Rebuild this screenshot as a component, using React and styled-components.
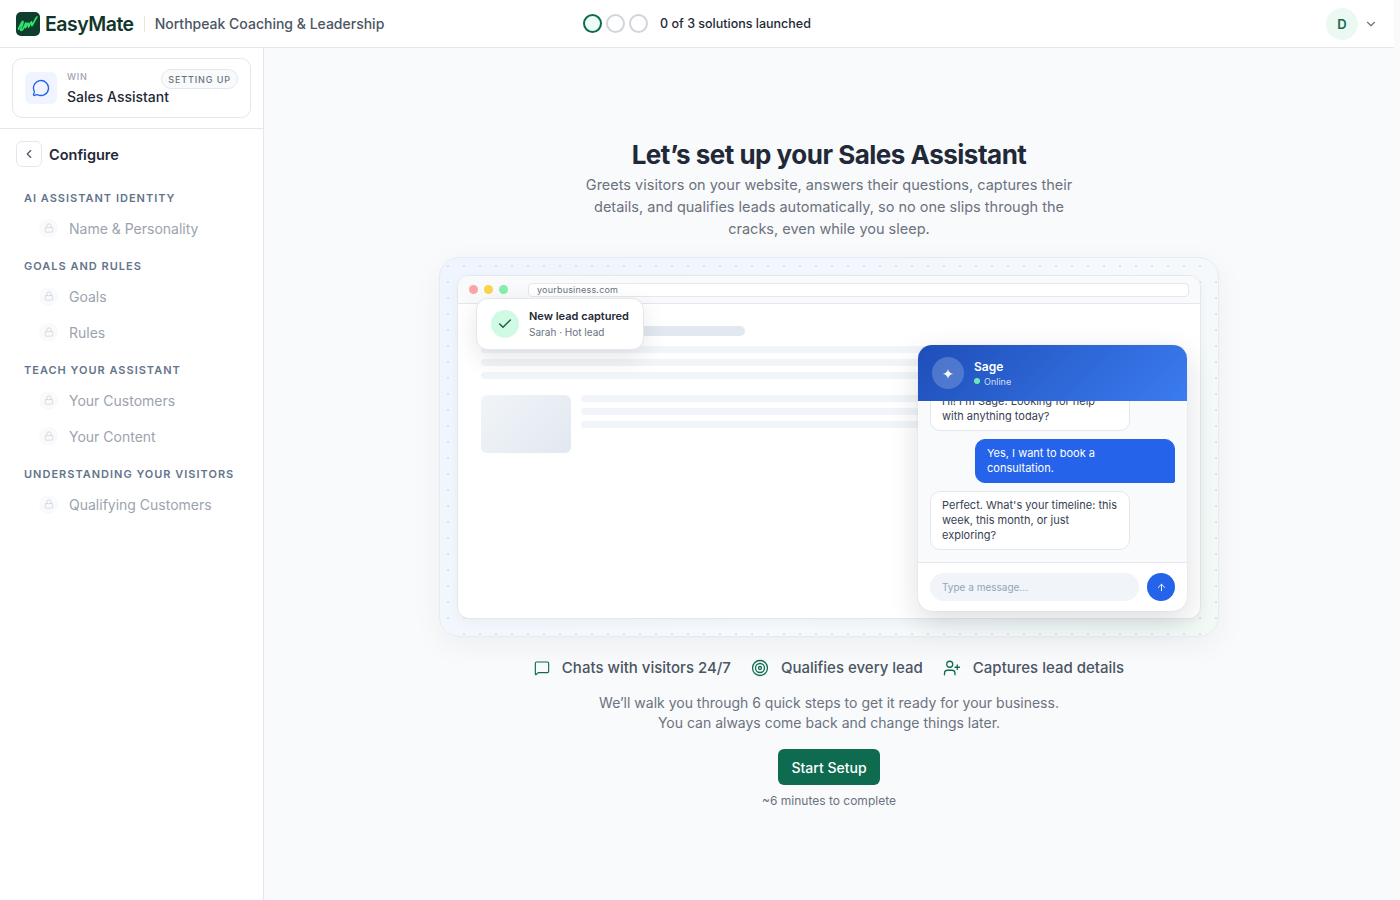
import styled, { createGlobalStyle } from "styled-components";
import {
  ArrowUp,
  Check,
  ChevronDown,
  ChevronLeft,
  Lock,
  MessageCircle,
  MessageSquare,
  Target,
  UserPlus,
} from "lucide-react";

const GlobalStyle = createGlobalStyle`
  * { box-sizing: border-box; }
  html, body { margin: 0; padding: 0; height: 100%; }
  body {
    background: #f9fafb;
    font-family: Inter, "Liberation Sans", sans-serif;
    color: #1f2937;
    overflow: hidden;
  }
`;

const NAV = [
  { title: "AI Assistant Identity", items: ["Name & Personality"] },
  { title: "Goals and Rules", items: ["Goals", "Rules"] },
  { title: "Teach Your Assistant", items: ["Your Customers", "Your Content"] },
  { title: "Understanding Your Visitors", items: ["Qualifying Customers"] },
];

function LogoMark() {
  return (
    <svg width="24" height="24" viewBox="0 0 24 24">
      <rect width="24" height="24" rx="5" fill="#0f3d2e" />
      <path
        d="M2.5 17c1.5-3 3-7 4.2-7.6 1-.4-.6 4.6-2 7.6-.6 1.6 1 1.8 2.2.2 1.2-1.6 2.4-5.2 3-6.2.4 1.2-.8 4.2-.4 4.6.8-1.4 2-4.8 2.8-4.6.6.2-.4 4 .2 4.2.8-1.4 2-5 3-5.4.4 1.2-.2 3.6.4 3.8 1-1 3-6 5-8.6"
        fill="none"
        stroke="#2ee66b"
        strokeWidth="1.7"
        strokeLinecap="round"
        strokeLinejoin="round"
      />
    </svg>
  );
}

export default function App() {
  return (
    <Shell>
      <GlobalStyle />
      <Frame>
        <TopBar>
          <Brand>
            <LogoMark />
            <BrandName>EasyMate</BrandName>
            <BrandDivider />
            <OrgName>Northpeak Coaching &amp; Leadership</OrgName>
          </Brand>
          <Progress>
            <ProgressRing $active />
            <ProgressRing />
            <ProgressRing />
            <ProgressText>0 of 3 solutions launched</ProgressText>
          </Progress>
          <UserArea>
            <Avatar>D</Avatar>
            <ChevronDown size={14} color="#6b7280" />
          </UserArea>
        </TopBar>
        <Body>
          <Sidebar>
            <SolutionWrap>
              <SolutionCard>
                <SolutionIcon>
                  <MessageCircle size={18} color="#2563eb" strokeWidth={1.8} />
                </SolutionIcon>
                <SolutionText>
                  <SolutionEyebrow>Win</SolutionEyebrow>
                  <SolutionName>Sales Assistant</SolutionName>
                </SolutionText>
                <StatusPill>Setting up</StatusPill>
              </SolutionCard>
            </SolutionWrap>
            <ConfigHead>
              <BackButton>
                <ChevronLeft size={14} color="#4b5563" />
              </BackButton>
              <ConfigTitle>Configure</ConfigTitle>
            </ConfigHead>
            <Nav>
              {NAV.map((section) => (
                <NavSection key={section.title}>
                  <NavLabel>{section.title}</NavLabel>
                  {section.items.map((item) => (
                    <NavItem key={item}>
                      <LockDot>
                        <Lock size={10} color="#d1d5db" />
                      </LockDot>
                      {item}
                    </NavItem>
                  ))}
                </NavSection>
              ))}
            </Nav>
          </Sidebar>
          <Main>
            <Title>Let’s set up your Sales Assistant</Title>
            <Lead>
              Greets visitors on your website, answers their questions, captures their
              details, and qualifies leads automatically, so no one slips through the cracks,
              even while you sleep.
            </Lead>
            <Stage>
              <Browser>
                <BrowserBar>
                  <WindowDots>
                    <WindowDot $color="#fca5a5" />
                    <WindowDot $color="#fcd34d" />
                    <WindowDot $color="#86efac" />
                  </WindowDots>
                  <UrlBar>yourbusiness.com</UrlBar>
                </BrowserBar>
                <BrowserBody>
                  <SkeletonHead />
                  <SkeletonLines>
                    <SkeletonLine />
                    <SkeletonLine />
                    <SkeletonLine />
                  </SkeletonLines>
                  <SkeletonRow>
                    <SkeletonImage />
                    <SkeletonLines>
                      <SkeletonLine />
                      <SkeletonLine />
                      <SkeletonLine />
                    </SkeletonLines>
                  </SkeletonRow>
                </BrowserBody>
              </Browser>
              <Toast>
                <ToastIcon>
                  <Check size={16} color="#166534" strokeWidth={2.2} />
                </ToastIcon>
                <div>
                  <ToastTitle>New lead captured</ToastTitle>
                  <ToastSub>Sarah · Hot lead</ToastSub>
                </div>
              </Toast>
              <ChatWidget>
                <ChatHeader>
                  <ChatAvatar>✦</ChatAvatar>
                  <div>
                    <ChatName>Sage</ChatName>
                    <ChatStatus>
                      <OnlineDot />
                      Online
                    </ChatStatus>
                  </div>
                </ChatHeader>
                <ChatMessages>
                  <Bubble>Hi! I'm Sage. Looking for help with anything today?</Bubble>
                  <Bubble $mine>Yes, I want to book a consultation.</Bubble>
                  <Bubble>Perfect. What's your timeline: this week, this month, or just exploring?</Bubble>
                </ChatMessages>
                <ChatInputRow>
                  <ChatInput>Type a message...</ChatInput>
                  <SendButton>
                    <ArrowUp size={11} color="#ffffff" />
                  </SendButton>
                </ChatInputRow>
              </ChatWidget>
            </Stage>
            <Features>
              <Feature>
                <MessageSquare size={16} color="#0f6b4f" strokeWidth={1.7} />
                Chats with visitors 24/7
              </Feature>
              <Feature>
                <Target size={18} color="#0f6b4f" strokeWidth={1.7} />
                Qualifies every lead
              </Feature>
              <Feature>
                <UserPlus size={18} color="#0f6b4f" strokeWidth={1.7} />
                Captures lead details
              </Feature>
            </Features>
            <WalkText>
              We’ll walk you through 6 quick steps to get it ready for your business. You
              can always come back and change things later.
            </WalkText>
            <StartButton>Start Setup</StartButton>
            <Estimate>~6 minutes to complete</Estimate>
          </Main>
        </Body>
      </Frame>
      <ScrollTrack />
    </Shell>
  );
}

const Shell = styled.div`
  display: flex;
  height: 900px;
  overflow: hidden;
`;

const Frame = styled.div`
  flex: 1;
  min-width: 0;
  display: flex;
  flex-direction: column;
`;

const ScrollTrack = styled.div`
  width: 6px;
  background: #fafafa;
`;

const TopBar = styled.header`
  height: 48px;
  flex: none;
  display: grid;
  grid-template-columns: 1fr auto 1fr;
  align-items: center;
  padding: 0 16px;
  background: #ffffff;
  border-bottom: 1px solid #e5e7eb;
  box-shadow: 0 1px 2px rgba(15, 23, 42, 0.03);
`;

const Brand = styled.div`
  display: flex;
  align-items: center;
`;

const BrandName = styled.span`
  margin-left: 5px;
  font-size: 19.5px;
  font-weight: 600;
  letter-spacing: -0.5px;
  color: #12372a;
`;

const BrandDivider = styled.span`
  width: 1px;
  height: 16px;
  margin: 0 10px;
  background: #e5e7eb;
`;

const OrgName = styled.span`
  font-size: 14px;
  font-weight: 500;
  color: #4b5563;
`;

const Progress = styled.div`
  display: flex;
  align-items: center;
  gap: 4px;
`;

const ProgressRing = styled.span`
  width: 19px;
  height: 19px;
  border-radius: 50%;
  border: 2px solid ${(p) => (p.$active ? "#0f6b4f" : "#d1d5db")};
  background: ${(p) => (p.$active ? "#ecfdf5" : "#ffffff")};
`;

const ProgressText = styled.span`
  margin-left: 8px;
  font-size: 12.5px;
  font-weight: 500;
  color: #1f2937;
`;

const UserArea = styled.div`
  display: flex;
  justify-content: flex-end;
  align-items: center;
  gap: 6px;
`;

const Avatar = styled.div`
  width: 32px;
  height: 32px;
  border-radius: 50%;
  display: flex;
  align-items: center;
  justify-content: center;
  background: #ecf8f2;
  color: #0f6b4f;
  font-size: 13px;
  font-weight: 600;
`;

const Body = styled.div`
  flex: 1;
  min-height: 0;
  display: flex;
`;

const Sidebar = styled.aside`
  width: 264px;
  flex: none;
  background: #ffffff;
  border-right: 1px solid #e5e7eb;
`;

const SolutionWrap = styled.div`
  padding: 10px 12px;
  border-bottom: 1px solid #e5e7eb;
`;

const SolutionCard = styled.div`
  position: relative;
  height: 60px;
  display: flex;
  align-items: center;
  gap: 10px;
  padding: 0 12px;
  border: 1px solid #e5e7eb;
  border-radius: 10px;
  background: #ffffff;
`;

const SolutionIcon = styled.div`
  width: 32px;
  height: 32px;
  flex: none;
  display: flex;
  align-items: center;
  justify-content: center;
  border-radius: 6px;
  background: #eff4fe;
`;

const SolutionText = styled.div`
  display: flex;
  flex-direction: column;
  gap: 5px;
`;

const SolutionEyebrow = styled.span`
  font-size: 9px;
  font-weight: 500;
  line-height: 12px;
  letter-spacing: 0.7px;
  text-transform: uppercase;
  color: #9ca3af;
`;

const SolutionName = styled.span`
  font-size: 14px;
  font-weight: 500;
  line-height: 17px;
  color: #1f2937;
`;

const StatusPill = styled.span`
  position: absolute;
  top: 10px;
  right: 12px;
  height: 20px;
  padding: 0 6px;
  display: flex;
  align-items: center;
  border: 1px solid #e5e7eb;
  border-radius: 10px;
  background: #f9fafb;
  font-size: 9px;
  font-weight: 500;
  letter-spacing: 0.9px;
  text-transform: uppercase;
  color: #6b7280;
`;

const ConfigHead = styled.div`
  display: flex;
  align-items: center;
  gap: 7px;
  padding: 12px 16px 0;
`;

const BackButton = styled.button`
  width: 26px;
  height: 26px;
  padding: 0;
  display: flex;
  align-items: center;
  justify-content: center;
  border: 1px solid #e5e7eb;
  border-radius: 6px;
  background: #ffffff;
`;

const ConfigTitle = styled.span`
  font-size: 14.5px;
  font-weight: 600;
  color: #1f2937;
`;

const Nav = styled.nav`
  padding: 12px 0 0 24px;
`;

const NavSection = styled.section`
  margin-top: 13px;
  &:first-child { margin-top: 12px; }
`;

const NavLabel = styled.div`
  height: 14px;
  margin-bottom: 5px;
  font-size: 11px;
  font-weight: 600;
  line-height: 14px;
  letter-spacing: 1px;
  text-transform: uppercase;
  color: #64748b;
`;

const NavItem = styled.div`
  height: 36px;
  display: flex;
  align-items: center;
  gap: 11px;
  padding-left: 15px;
  font-size: 14px;
  color: #9ca3af;
`;

const LockDot = styled.span`
  width: 19px;
  height: 19px;
  display: flex;
  align-items: center;
  justify-content: center;
  border-radius: 50%;
  background: #f9fafb;
`;

const Main = styled.main`
  flex: 1;
  min-width: 0;
  display: flex;
  flex-direction: column;
  align-items: center;
  padding-top: 88px;
  background: #f9fafb;
`;

const Title = styled.h1`
  margin: 0;
  font-size: 26px;
  font-weight: 700;
  line-height: 38px;
  letter-spacing: -0.5px;
  color: #1f2937;
`;

const Lead = styled.p`
  width: 520px;
  margin: 0;
  font-size: 14.5px;
  line-height: 22px;
  text-align: center;
  color: #6b7280;
`;

const Stage = styled.div`
  position: relative;
  width: 780px;
  height: 380px;
  margin-top: 17px;
  padding: 17px;
  border: 1px solid #e6ebf3;
  border-radius: 20px;
  background:
    radial-gradient(circle, #d9e2ee 0.7px, transparent 1.1px) 0 0 / 16px 16px,
    linear-gradient(135deg, #eff5fe 0%, #f6f9fd 60%, #f1f9f5 100%);
  box-shadow: 0 8px 30px rgba(15, 23, 42, 0.05);
`;

const Browser = styled.div`
  height: 100%;
  overflow: hidden;
  border: 1px solid #e5e7eb;
  border-radius: 12px;
  background: #ffffff;
  box-shadow: 0 4px 12px rgba(15, 23, 42, 0.04);
`;

const BrowserBar = styled.div`
  height: 28px;
  display: flex;
  align-items: center;
  gap: 20px;
  padding: 0 11px;
  background: #f8fafc;
  border-bottom: 1px solid #e5e7eb;
`;

const WindowDots = styled.div`
  display: flex;
  gap: 6px;
`;

const WindowDot = styled.span`
  width: 9px;
  height: 9px;
  border-radius: 50%;
  background: ${(p) => p.$color};
`;

const UrlBar = styled.div`
  flex: 1;
  height: 14px;
  padding-left: 8px;
  border: 1px solid #e5e7eb;
  border-radius: 4px;
  background: #ffffff;
  font-size: 9px;
  line-height: 12px;
  letter-spacing: 0.2px;
  color: #6b7280;
`;

const BrowserBody = styled.div`
  padding: 22px 23px;
`;

const SkeletonHead = styled.div`
  width: 264px;
  height: 10px;
  border-radius: 5px;
  background: #e2e8f0;
`;

const SkeletonLines = styled.div`
  flex: 1;
  display: flex;
  flex-direction: column;
  gap: 6px;
  margin-top: 10px;
`;

const SkeletonLine = styled.div`
  height: 7px;
  border-radius: 4px;
  background: #f1f5f9;
`;

const SkeletonRow = styled.div`
  display: flex;
  gap: 10px;
  margin-top: 16px;
  & ${SkeletonLines} { margin-top: 0; }
`;

const SkeletonImage = styled.div`
  width: 90px;
  height: 58px;
  border-radius: 6px;
  background: linear-gradient(135deg, #f1f5f9, #e2e8f0);
`;

const Toast = styled.div`
  position: absolute;
  top: 40px;
  left: 36px;
  width: 168px;
  height: 52px;
  display: flex;
  align-items: center;
  gap: 10px;
  padding: 0 14px;
  border: 1px solid #e5e7eb;
  border-radius: 12px;
  background: #ffffff;
  box-shadow: 0 8px 24px rgba(15, 23, 42, 0.1);
`;

const ToastIcon = styled.div`
  width: 28px;
  height: 28px;
  flex: none;
  display: flex;
  align-items: center;
  justify-content: center;
  border-radius: 50%;
  background: #d1fae5;
`;

const ToastTitle = styled.div`
  font-size: 11px;
  font-weight: 600;
  line-height: 16px;
  white-space: nowrap;
  color: #1f2937;
`;

const ToastSub = styled.div`
  font-size: 10px;
  line-height: 16px;
  color: #6b7280;
`;

const ChatWidget = styled.div`
  position: absolute;
  top: 87px;
  right: 31px;
  width: 269px;
  height: 266px;
  display: flex;
  flex-direction: column;
  overflow: hidden;
  border-radius: 14px;
  background: #ffffff;
  box-shadow: 0 10px 30px rgba(15, 23, 42, 0.14), 0 0 1px rgba(15, 23, 42, 0.2);
`;

const ChatHeader = styled.div`
  height: 56px;
  flex: none;
  display: flex;
  align-items: center;
  gap: 10px;
  padding: 0 14px;
  background: linear-gradient(135deg, #1e4eb8, #3b7cf0);
  color: #ffffff;
`;

const ChatAvatar = styled.div`
  width: 32px;
  height: 32px;
  display: flex;
  align-items: center;
  justify-content: center;
  border-radius: 50%;
  background: rgba(255, 255, 255, 0.2);
  font-size: 14px;
  color: #ffffff;
`;

const ChatName = styled.div`
  font-size: 12px;
  font-weight: 600;
  line-height: 16px;
`;

const ChatStatus = styled.div`
  display: flex;
  align-items: center;
  gap: 4px;
  font-size: 9px;
  line-height: 13px;
  color: rgba(255, 255, 255, 0.8);
`;

const OnlineDot = styled.span`
  width: 6px;
  height: 6px;
  border-radius: 50%;
  background: #6ee7b7;
`;

const ChatMessages = styled.div`
  flex: 1;
  min-height: 0;
  overflow: hidden;
  display: flex;
  flex-direction: column;
  justify-content: flex-end;
  gap: 8px;
  padding: 0 12px 12px;
  background: #f8fafc;
`;

const Bubble = styled.div`
  flex: none;
  max-width: 200px;
  align-self: ${(p) => (p.$mine ? "flex-end" : "flex-start")};
  width: ${(p) => (p.$mine ? "auto" : "200px")};
  padding: 6px 11px;
  border: 1px solid ${(p) => (p.$mine ? "#2563eb" : "#e5e7eb")};
  border-radius: ${(p) => (p.$mine ? "10px 10px 2px 10px" : "10px 10px 10px 10px")};
  background: ${(p) => (p.$mine ? "#2563eb" : "#ffffff")};
  font-size: 11px;
  line-height: 15px;
  color: ${(p) => (p.$mine ? "#ffffff" : "#374151")};
`;

const ChatInputRow = styled.div`
  height: 49px;
  flex: none;
  display: flex;
  align-items: center;
  gap: 8px;
  padding: 0 12px;
  border-top: 1px solid #e5e7eb;
`;

const ChatInput = styled.div`
  flex: 1;
  height: 28px;
  padding: 0 12px;
  display: flex;
  align-items: center;
  border-radius: 14px;
  background: #f1f5f9;
  font-size: 10px;
  color: #94a3b8;
`;

const SendButton = styled.button`
  width: 28px;
  height: 28px;
  padding: 0;
  display: flex;
  align-items: center;
  justify-content: center;
  border: 0;
  border-radius: 50%;
  background: #2563eb;
`;

const Features = styled.div`
  display: flex;
  align-items: center;
  gap: 20px;
  margin-top: 20px;
`;

const Feature = styled.div`
  display: flex;
  align-items: center;
  gap: 12px;
  font-size: 15px;
  font-weight: 500;
  line-height: 22px;
  color: #4b5563;
`;

const WalkText = styled.p`
  width: 470px;
  margin: 14px 0 0;
  font-size: 14px;
  line-height: 20px;
  text-align: center;
  color: #6b7280;
`;

const StartButton = styled.button`
  width: 102px;
  height: 36px;
  margin-top: 16px;
  border: 0;
  border-radius: 6px;
  background: #0f6b4f;
  font-family: inherit;
  font-size: 14px;
  font-weight: 500;
  color: #ffffff;
`;

const Estimate = styled.div`
  margin-top: 8px;
  font-size: 12px;
  line-height: 16px;
  color: #6b7280;
`;
